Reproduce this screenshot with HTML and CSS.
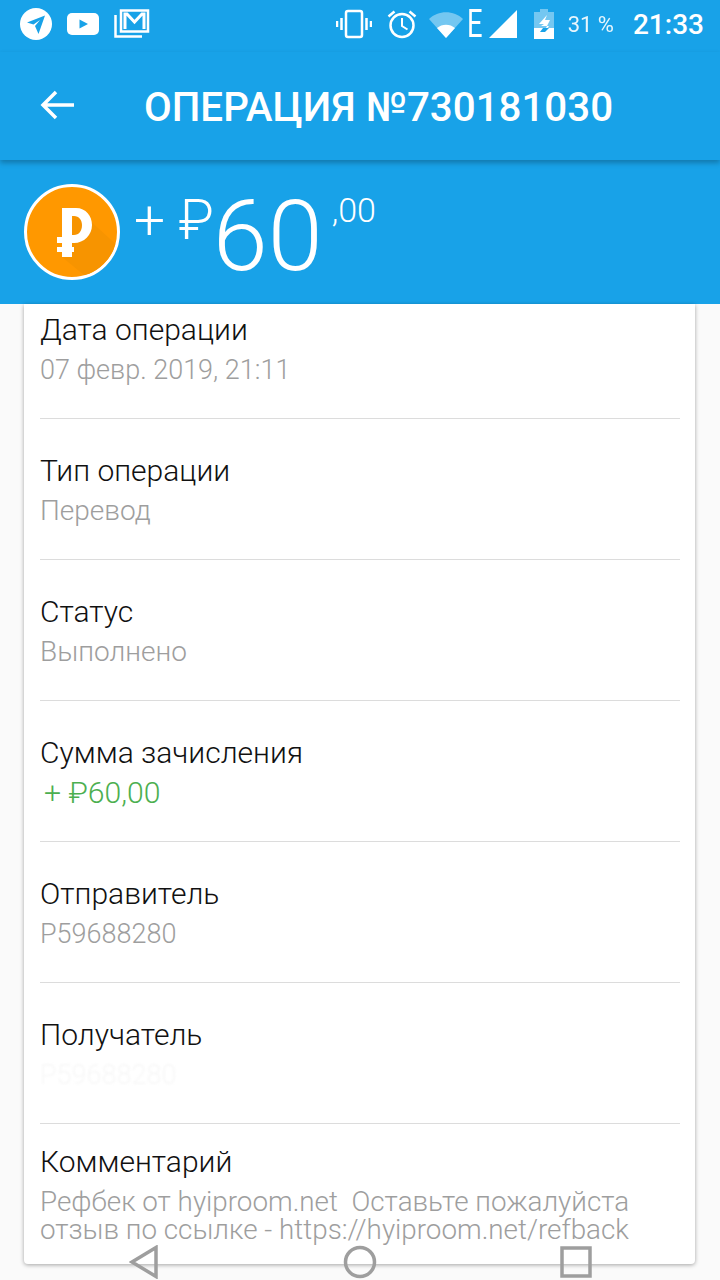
FILE: index.html
```html
<!DOCTYPE html>
<html lang="ru">
<head>
    <meta charset="UTF-8">
    <meta name="viewport" content="width=device-width, initial-scale=1.0">
    <title>Операция</title>
    <link rel="stylesheet" href="styles.css">
</head>
<body>
    <div class="screen">
        <div class="status-bar">
            <div class="status-left">
                <svg class="icon-telegram" viewBox="0 0 32 32" width="32" height="32">
                    <circle cx="16" cy="16" r="16" fill="#fff"/>
                    <path d="M7 14.500 L25 7.500 L18.500 26 L15 18 L20 12 L13.500 16.500 Z" fill="#18a2e8"/>
                </svg>
                <svg class="icon-youtube" viewBox="0 0 32 24" width="32" height="24">
                    <rect width="32" height="22" y="1" rx="5" fill="#fff"/>
                    <path d="M12.500 7.500 L21 12 L12.500 16.500 Z" fill="#18a2e8"/>
                </svg>
                <svg class="icon-mail" viewBox="0 0 36 30" width="36" height="30" fill="none" stroke="#fff">
                    <path d="M1.500 6 V27.500 H28" stroke-width="2.500"/>
                    <rect x="7" y="1.500" width="27" height="21" stroke-width="2.500"/>
                    <path d="M11 20 V5 H13 L20.500 13 L28 5 H30 V20" stroke-width="3"/>
                </svg>
            </div>
            <div class="status-right">
                <svg class="icon-vibrate" viewBox="0 0 36 30" width="36" height="30" fill="none" stroke="#fff" stroke-width="2">
                    <rect x="10" y="2" width="16" height="26" rx="2" stroke-width="2.500"/>
                    <path d="M5.500 9 V21 M1 12 V18 M30.500 9 V21 M35 12 V18" stroke-width="2.500"/>
                </svg>
                <svg class="icon-alarm" viewBox="0 0 30 30" width="30" height="30" fill="none" stroke="#fff" stroke-width="2.500">
                    <circle cx="15" cy="16.500" r="11.500"/>
                    <path d="M15 9 V17 L20.500 20.500" stroke-width="2"/>
                    <path d="M1.500 7.500 L7.500 2.500 M28.500 7.500 L22.500 2.500"/>
                </svg>
                <svg class="icon-wifi" viewBox="0 0 34 28" width="34" height="28">
                    <path d="M0 9 C9 0 25 0 34 9 L17 28 Z" fill="#fff" opacity="0.4"/>
                    <path d="M8 18 C13 13.500 21 13.500 26 18 L17 28 Z" fill="#fff"/>
                </svg>
                <div class="network-group">
                    <span class="network-type">E</span>
                    <svg class="icon-signal" viewBox="0 0 30 30" width="30" height="28">
                        <path d="M0 30 L30 0 V30 Z" fill="#fff"/>
                    </svg>
                </div>
                <svg class="icon-battery" viewBox="0 0 20 30" width="20" height="30">
                    <path d="M6 0 H14 V3 H20 V30 H0 V3 H6 Z" fill="#fff" opacity="0.4"/>
                    <path d="M0 19 H20 V30 H0 Z" fill="#fff"/>
                    <path d="M13 6 L5 15 H10 L7 17 H15 L11 23 H16 V19 H12 L16 11 H11 Z" fill="#fff"/>
                    <path d="M9 19 H15 L11 23 H6 Z" fill="#18a2e8"/>
                </svg>
                <span class="battery-level">31 %</span>
                <span class="clock">21:33</span>
            </div>
        </div>

        <div class="app-bar">
            <svg class="icon-back" viewBox="0 0 34 30" width="34" height="30" fill="none" stroke="#fff" stroke-width="3.500">
                <path d="M34 15 H3 M16 2 L3 15 L16 28"/>
            </svg>
            <h1 class="app-title">ОПЕРАЦИЯ №730181030</h1>
        </div>

        <div class="amount-header">
            <svg class="coin" viewBox="0 0 96 96" width="96" height="96">
                <defs>
                    <clipPath id="coin-clip">
                        <circle cx="48" cy="48" r="45"/>
                    </clipPath>
                </defs>
                <circle cx="48" cy="48" r="46.500" fill="#ff9800" stroke="#fff" stroke-width="3"/>
                <path d="M52 24 L96 64 L66 96 L38 73 Z" fill="#f79400" clip-path="url(#coin-clip)"/>
                <path d="M38 24 H52 C62 24 68 32 68 41 C68 51 60 59 50 59 H48 V63 H50 V68 H48 V73 H38 V68 H33 V63 H38 V59 H33 V53 H38 Z M48 32 V51 H50 C55 51 58 47 58 41 C58 36 55 32 50 32 Z" fill="#fff" fill-rule="evenodd"/>
            </svg>
            <div class="amount">
                <span class="amount-sign">+ ₽</span>
                <span class="amount-value">60</span>
                <span class="amount-cents">,00</span>
            </div>
        </div>

        <div class="card">
            <div class="row row-first">
                <div class="row-label">Дата операции</div>
                <div class="row-value value-num">07 февр. 2019, 21:11</div>
            </div>
            <div class="row">
                <div class="row-label">Тип операции</div>
                <div class="row-value">Перевод</div>
            </div>
            <div class="row">
                <div class="row-label">Статус</div>
                <div class="row-value">Выполнено</div>
            </div>
            <div class="row">
                <div class="row-label">Сумма зачисления</div>
                <div class="row-value value-green">+ ₽60,00</div>
            </div>
            <div class="row">
                <div class="row-label">Отправитель</div>
                <div class="row-value value-num">P59688280</div>
            </div>
            <div class="row">
                <div class="row-label">Получатель</div>
                <div class="row-value value-num value-hidden">P59688280</div>
            </div>
            <div class="row row-last">
                <div class="row-label">Комментарий</div>
                <div class="row-value value-multi">Рефбек от hyiproom.net&nbsp; Оставьте пожалуйста<br>отзыв по ссылке - https://hyiproom.net/refback</div>
            </div>
        </div>

        <div class="nav-bar">
            <svg viewBox="0 0 30 34" width="30" height="34" fill="none" stroke="#9e9e9e" stroke-width="3.500">
                <path d="M27 2.500 V31.500 L3 17 Z"/>
            </svg>
            <svg viewBox="0 0 34 34" width="34" height="34" fill="none" stroke="#9e9e9e" stroke-width="3.500">
                <circle cx="17" cy="17" r="14.500"/>
            </svg>
            <svg viewBox="0 0 32 32" width="32" height="32" fill="none" stroke="#9e9e9e" stroke-width="3.500">
                <rect x="2" y="2" width="28" height="28"/>
            </svg>
        </div>
    </div>
</body>
</html>
```

FILE: styles.css
```css
* {
    box-sizing: border-box;
}

body {
    margin: 0;
    padding: 0;
    font-family: Roboto, "Noto Sans", sans-serif;
    background-color: #fafafa;
}

.screen {
    position: relative;
    width: 720px;
    height: 1280px;
    overflow: hidden;
    background-color: #fafafa;
}

.status-bar {
    height: 52px;
    padding: 0 16px 4px 20px;
    background: #18a2e8;
    display: flex;
    justify-content: space-between;
    align-items: center;
    color: #fff;
}

.status-left {
    display: flex;
    align-items: center;
    gap: 15px;
}

.status-right {
    display: flex;
    align-items: center;
}

.icon-alarm {
    margin-left: 15px;
}

.icon-wifi {
    margin-left: 12px;
}

.network-group {
    display: flex;
    align-items: center;
    margin-left: 4px;
}

.network-type {
    width: 21px;
    font-size: 38px;
    line-height: 32px;
    font-weight: 400;
    transform: scaleX(0.72);
    transform-origin: left center;
}

.icon-battery {
    margin-left: 16px;
}

.battery-level {
    margin-left: 14px;
    font-size: 22px;
    opacity: 0.9;
}

.clock {
    margin-left: 19px;
    font-size: 28px;
    font-weight: 500;
}

.app-bar {
    position: relative;
    z-index: 1;
    height: 108px;
    padding: 2px 0 0 40px;
    display: flex;
    align-items: center;
    background: #18a2e8;
    box-shadow: 0 3px 5px rgba(0, 0, 0, 0.25);
}

.icon-back {
    margin-bottom: 4px;
}

.app-title {
    margin: 0 0 0 70px;
    font-size: 40.3px;
    font-weight: 500;
    color: #fff;
    white-space: nowrap;
}

.amount-header {
    height: 144px;
    padding: 24px 0 0 24px;
    display: flex;
    align-items: flex-start;
    background: #18a2e8;
}

.amount {
    margin-left: 14px;
    display: flex;
    align-items: flex-start;
    color: #fff;
    font-weight: 300;
    white-space: nowrap;
}

.amount-sign {
    margin-top: 6px;
    font-size: 55px;
    line-height: 60px;
}

.amount-value {
    margin-left: -1px;
    font-size: 99px;
    line-height: 104px;
}

.amount-cents {
    margin-left: 9px;
    font-size: 34px;
    line-height: 52px;
}

.card {
    width: 671px;
    height: 960px;
    margin-left: 24px;
    padding: 0 15px 0 16px;
    background: #fff;
    border-radius: 0 0 4px 4px;
    box-shadow: 0 1px 4px rgba(0, 0, 0, 0.35);
}

.row {
    height: 141px;
    padding-top: 34px;
    border-bottom: 1px solid #dcdcdc;
}

.row-first {
    height: 115px;
    padding-top: 8px;
}

.row-last {
    height: auto;
    padding-top: 20px;
    border-bottom: none;
}

.row-label {
    font-size: 30px;
    line-height: 36px;
    font-weight: 300;
    color: #111;
}

.row-value {
    margin-top: 4px;
    font-size: 28px;
    line-height: 36px;
    font-weight: 300;
    color: #9e9e9e;
}

.value-num {
    font-size: 27px;
}

.value-green {
    color: #4caf50;
    font-size: 30.2px;
    padding-left: 4px;
}

.value-hidden {
    color: #f7f7f7;
    filter: blur(1px);
}

.value-multi {
    margin-top: 8px;
    font-size: 27.8px;
    line-height: 28px;
    white-space: nowrap;
}

.nav-bar {
    position: absolute;
    left: 129px;
    right: 128px;
    bottom: 1px;
    display: flex;
    justify-content: space-between;
    align-items: center;
}
```
